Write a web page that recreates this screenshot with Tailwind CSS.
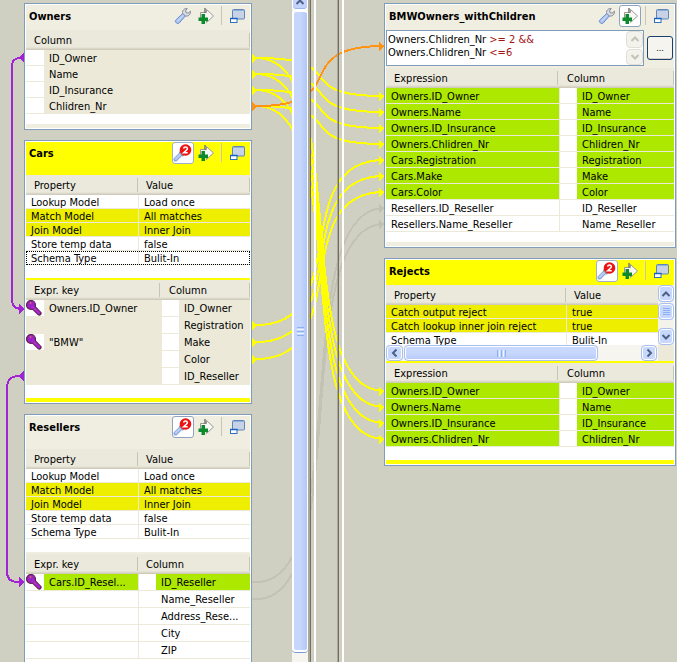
<!DOCTYPE html>
<html lang="en">
<head>
<meta charset="utf-8">
<title>Map editor</title>
<script src="https://cdn.jsdelivr.net/npm/@tailwindcss/browser@4"></script>
</head>
<body class="bg-[#d0d0c2] text-[11px] text-black font-['DejaVu_Sans_Condensed','DejaVu_Sans',sans-serif]">

<svg class="hidden" aria-hidden="true">
  <defs>
    <symbol id="i-wrench" viewBox="0 0 18 18">
      <path d="M1.600 13.200 9 6.200 11.600 8.800 5 16.200C3.600 17.600.4 15 1.600 13.200Z" fill="#a9c1f0" stroke="#6d8fd0" stroke-width="1"/>
      <path d="M3.400 14.200 9.600 8" stroke="#c6d7f9" stroke-width="1.400"/>
      <path d="M8.600 6.600C8 3.600 10.200 1.200 13.200 1.600L11.600 3.800 12.200 5.800 14.200 6 16.400 4.200C17 7 14.600 9.600 11.600 9Z" fill="#d9dce2" stroke="#808898" stroke-width="1"/>
    </symbol>
    <symbol id="i-add" viewBox="0 0 18 18">
      <path d="M3.500 5.500H9.500V2.500L16.500 9 9.500 15.500V12.500H3.500Z" fill="#f7f7f4" stroke="#9a9a94" stroke-width="1"/>
      <path d="M8 1v5" stroke="#77776f" stroke-width="1.500"/>
      <path d="M4.500 7H8v3.500h3V14H8v3H4.500v-3h-3v-3.500h3Z" fill="#0c8a2c"/>
    </symbol>
    <symbol id="i-window" viewBox="0 0 17 17">
      <rect x="3.500" y="1.500" width="12" height="9.500" rx="1" fill="#c8d2e6" stroke="#5f86bb"/>
      <path d="M4 2.500h11" stroke="#8fb0da"/>
      <rect x="1.500" y="10.500" width="6.500" height="4" fill="#fff" stroke="#2f6fc0"/>
      <path d="M1 10.500h7.500" stroke="#1b62c4" stroke-width="1.500"/>
    </symbol>
    <symbol id="i-alert" viewBox="0 0 20 20">
      <path d="M2.500 16.500 8.500 10.500" stroke="#86a4dc" stroke-width="4" stroke-linecap="round"/>
      <path d="M2.800 16 8 10.800" stroke="#b9cdf2" stroke-width="2.400" stroke-linecap="round"/>
      <path d="M6.500 8.500 10.500 13" stroke="#8a90a0" stroke-width="2"/>
      <circle cx="12.500" cy="7" r="5.800" fill="#ee1111"/>
      <path d="M10.600 5.600Q10.800 4 12.500 4T14.400 5.600Q14.400 6.800 10.600 9.800H14.700" fill="none" stroke="#fff" stroke-width="1.500"/>
    </symbol>
    <symbol id="i-key" viewBox="0 0 16 16">
      <path d="M7.500 7.500 13.300 13.300" stroke="#5e2448" stroke-width="4.600" stroke-linecap="round"/>
      <circle cx="5" cy="5" r="4.500" fill="#9b22c4" stroke="#5e2448" stroke-width="1.200"/>
      <path d="M7 7 13 13" stroke="#a526d2" stroke-width="2.800" stroke-linecap="round"/>
      <path d="M3.500 3h2M4.500 2v2M8.500 10l1-1" stroke="#cf6a72" stroke-width="1"/>
    </symbol>
    <symbol id="i-up" viewBox="0 0 10 10"><path d="M1.500 7 5 3.500 8.500 7" fill="none" stroke="currentColor" stroke-width="2"/></symbol>
    <symbol id="i-down" viewBox="0 0 10 10"><path d="M1.500 3 5 6.500 8.500 3" fill="none" stroke="currentColor" stroke-width="2"/></symbol>
    <symbol id="i-left" viewBox="0 0 10 10"><path d="M6.500 1.500 3 5 6.500 8.500" fill="none" stroke="currentColor" stroke-width="2"/></symbol>
    <symbol id="i-right" viewBox="0 0 10 10"><path d="M3.500 1.500 7 5 3.500 8.500" fill="none" stroke="currentColor" stroke-width="2"/></symbol>
  </defs>
</svg>

<div class="relative flex h-screen overflow-hidden">

  <!-- Connections between the tables -->
  <svg class="absolute left-0 top-0" width="677" height="662" fill="none" stroke-width="2" shape-rendering="crispEdges" aria-hidden="true">
    <g stroke="#c3c3b5">
      <path d="M252 582h5C355 582 286 208 384 208"/>
      <path d="M252 599h5C355 599 286 224 384 224"/>
    </g>
    <g stroke="#ffff00">
      <path d="M252 58h5C355 58 286 96 384 96"/>
      <path d="M252 74h5C355 74 286 112 384 112"/>
      <path d="M252 90h5C355 90 286 128 384 128"/>
      <path d="M252 106h5C355 106 286 144 384 144"/>
      <path d="M252 58h5C355 58 286 391 384 391"/>
      <path d="M252 74h5C355 74 286 407 384 407"/>
      <path d="M252 90h5C355 90 286 423 384 423"/>
      <path d="M252 106h5C355 106 286 439 384 439"/>
      <path d="M252 325h5C355 325 286 160 384 160"/>
      <path d="M252 342h5C355 342 286 176 384 176"/>
      <path d="M252 359h5C355 359 286 192 384 192"/>
    </g>
    <path stroke="#ff9414" d="M252 106h5C355 106 286 46 384 46"/>
    <g fill="#ffff00">
      <path d="M252 53v11l5-5.500zM252 69v11l5-5.500zM252 85v11l5-5.500zM252 320v11l5-5.500zM252 337v11l5-5.500zM252 354v11l5-5.500z"/>
      <path d="M379 91v11l5-5.500zM379 107v11l5-5.500zM379 123v11l5-5.500zM379 139v11l5-5.500zM379 155v11l5-5.500zM379 171v11l5-5.500zM379 187v11l5-5.500z"/>
      <path d="M379 386v11l5-5.500zM379 402v11l5-5.500zM379 418v11l5-5.500zM379 434v11l5-5.500z"/>
    </g>
    <path fill="#c1c1b2" d="M379 203v11l5-5.500zM379 219v11l5-5.500z"/>
    <path fill="#ff9414" d="M252 101v11l5-5.500zM379 41v11l5-5.500z"/>
    <g stroke="#a024d4">
      <path d="M24 58h-4Q12 58 12 66V299Q12 309 22 309"/>
      <path d="M24 376h-5Q7 376 7 388V572Q7 582 18 582H22"/>
    </g>
    <path fill="#a024d4" d="M24 52v11l-5-5.500zM24 370v12l-5-6zM19 303v12l5-6zM19 576v12l5-6z"/>
  </svg>

  <!-- Input tables -->
  <main class="relative flex min-w-0 flex-[311_1_0px]">
    <div class="flex min-w-0 flex-1 flex-col gap-[10px] pl-6 pr-10 pt-[3px]">

      <section class="shrink-0 border border-[#7f9db9] bg-white p-px" aria-label="Owners">
        <header class="flex h-[25px] items-start bg-[#f0eee1] pl-[3px] pr-1">
          <h2 class="flex-1 font-bold leading-[24px]">Owners</h2>
          <button class="flex size-[22px] items-center justify-center" aria-label="Settings"><svg class="size-[18px]"><use href="#i-wrench"/></svg></button>
          <button class="ml-px flex size-[22px] items-center justify-center" aria-label="Add"><svg class="size-[18px]"><use href="#i-add"/></svg></button>
          <span class="mx-1 mt-px h-[19px] w-px bg-[#c9c6b3]"></span>
          <button class="flex h-[22px] w-[20px] items-center justify-end" aria-label="Minimize"><svg class="size-[17px]"><use href="#i-window"/></svg></button>
        </header>
        <table class="w-full table-fixed border-separate border-spacing-0 [&_td]:h-4 [&_td]:border-b [&_td]:border-[#ece9d8] [&_td]:pt-[2px] [&_td]:leading-[13px] [&_th]:h-5 [&_th]:bg-linear-to-b [&_th]:from-[#ebe9dc] [&_th]:from-85% [&_th]:to-[#cbc6b5] [&_th]:text-left [&_th]:font-normal">
          <colgroup><col class="w-[18px]"><col></colgroup>
          <thead><tr><th colspan="2"><span class="flex h-[14px] items-center border-r border-[#c7c5b2] pl-2 pt-[2px]">Column</span></th></tr></thead>
          <tbody>
            <tr><td></td><td class="bg-[#ece9d8] pl-[5px]">ID_Owner</td></tr>
            <tr><td></td><td class="bg-[#ece9d8] pl-[5px]">Name</td></tr>
            <tr><td></td><td class="bg-[#ece9d8] pl-[5px]">ID_Insurance</td></tr>
            <tr><td></td><td class="bg-[#ece9d8] pl-[5px]">Chlidren_Nr</td></tr>
          </tbody>
        </table>
        <div class="mt-[10px] h-1 bg-[#f0eee1]"></div>
      </section>

      <section class="shrink-0 border border-[#7f9db9] bg-white p-px" aria-label="Cars">
        <header class="flex h-[33px] items-start bg-[#ffff00] pl-[3px] pr-1">
          <h2 class="flex-1 font-bold leading-[24px]">Cars</h2>
          <button class="flex size-[22px] items-center justify-center rounded-[3px] border border-[#a0b0cc] bg-white" aria-label="Settings, 2 changed"><svg class="size-5"><use href="#i-alert"/></svg></button>
          <button class="ml-px flex size-[22px] items-center justify-center" aria-label="Add"><svg class="size-[18px]"><use href="#i-add"/></svg></button>
          <span class="mx-1 mt-px h-[19px] w-px bg-[#c9c6b3]"></span>
          <button class="flex h-[22px] w-[20px] items-center justify-end" aria-label="Minimize"><svg class="size-[17px]"><use href="#i-window"/></svg></button>
        </header>
        <table class="w-full table-fixed border-separate border-spacing-0 [&_td]:h-[14px] [&_td]:border-b [&_td]:border-[#ece9d8] [&_td]:pl-[5px] [&_td]:pt-[2px] [&_td]:leading-[11px] [&_td:first-child]:border-r [&_th]:h-5 [&_th]:bg-linear-to-b [&_th]:from-[#ebe9dc] [&_th]:from-85% [&_th]:to-[#cbc6b5] [&_th]:text-left [&_th]:font-normal">
          <colgroup><col class="w-[113px]"><col></colgroup>
          <thead><tr>
            <th><span class="mr-px flex h-[14px] items-center border-r border-[#c7c5b2] pl-2 pt-[2px]">Property</span></th>
            <th><span class="flex h-[14px] items-center border-r border-[#c7c5b2] pl-[7px] pt-[2px]">Value</span></th>
          </tr></thead>
          <tbody>
            <tr><td>Lookup Model</td><td>Load once</td></tr>
            <tr class="bg-[#eeee00]"><td>Match Model</td><td>All matches</td></tr>
            <tr class="bg-[#eeee00]"><td>Join Model</td><td>Inner Join</td></tr>
            <tr><td>Store temp data</td><td>false</td></tr>
            <tr class="outline-1 -outline-offset-1 outline-dotted outline-black"><td>Schema Type</td><td>Bulit-In</td></tr>
          </tbody>
        </table>
        <div class="mt-[13px] h-[2px] bg-[#ffff00]"></div>
        <table class="w-full table-fixed border-separate border-spacing-0 bg-[#ece9d8] [&_td]:h-[17px] [&_td]:border-b [&_td]:border-[#ece9d8] [&_td]:pt-[2px] [&_td]:leading-[14px] [&_th]:h-5 [&_th]:bg-linear-to-b [&_th]:from-[#ebe9dc] [&_th]:from-85% [&_th]:to-[#cbc6b5] [&_th]:text-left [&_th]:font-normal">
          <colgroup><col class="w-[18px]"><col class="w-[118px]"><col class="w-[17px]"><col></colgroup>
          <thead><tr>
            <th colspan="2"><span class="mr-[2px] flex h-[14px] items-center border-r border-[#c7c5b2] pl-2 pt-[2px]">Expr. key</span></th>
            <th colspan="2"><span class="flex h-[14px] items-center border-r border-[#c7c5b2] pl-[7px] pt-[2px]">Column</span></th>
          </tr></thead>
          <tbody>
            <tr><td class="bg-white pt-0!"><svg class="size-4"><use href="#i-key"/></svg></td><td class="pl-[5px]">Owners.ID_Owner</td><td class="bg-white"></td><td class="pl-[5px]">ID_Owner</td></tr>
            <tr><td></td><td></td><td class="bg-white"></td><td class="pl-[5px]">Registration</td></tr>
            <tr><td class="bg-white pt-0!"><svg class="size-4"><use href="#i-key"/></svg></td><td class="pl-[5px]">"BMW"</td><td class="bg-white"></td><td class="pl-[5px]">Make</td></tr>
            <tr><td></td><td></td><td class="bg-white"></td><td class="pl-[5px]">Color</td></tr>
            <tr><td></td><td></td><td class="bg-white"></td><td class="pl-[5px]">ID_Reseller</td></tr>
          </tbody>
        </table>
        <div class="mt-[13px] h-1 bg-[#ffff00]"></div>
      </section>

      <section class="shrink-0 border border-[#7f9db9] bg-white p-px" aria-label="Resellers">
        <header class="flex h-[33px] items-start bg-[#f0eee1] pl-[3px] pr-1">
          <h2 class="flex-1 font-bold leading-[24px]">Resellers</h2>
          <button class="flex size-[22px] items-center justify-center rounded-[3px] border border-[#8fa3c0] bg-white" aria-label="Settings, 2 changed"><svg class="size-5"><use href="#i-alert"/></svg></button>
          <button class="ml-px flex size-[22px] items-center justify-center" aria-label="Add"><svg class="size-[18px]"><use href="#i-add"/></svg></button>
          <span class="mx-1 mt-px h-[19px] w-px bg-[#c9c6b3]"></span>
          <button class="flex h-[22px] w-[20px] items-center justify-end" aria-label="Minimize"><svg class="size-[17px]"><use href="#i-window"/></svg></button>
        </header>
        <table class="w-full table-fixed border-separate border-spacing-0 [&_td]:h-[14px] [&_td]:border-b [&_td]:border-[#ece9d8] [&_td]:pl-[5px] [&_td]:pt-[2px] [&_td]:leading-[11px] [&_td:first-child]:border-r [&_th]:h-5 [&_th]:bg-linear-to-b [&_th]:from-[#ebe9dc] [&_th]:from-85% [&_th]:to-[#cbc6b5] [&_th]:text-left [&_th]:font-normal">
          <colgroup><col class="w-[113px]"><col></colgroup>
          <thead><tr>
            <th><span class="mr-px flex h-[14px] items-center border-r border-[#c7c5b2] pl-2 pt-[2px]">Property</span></th>
            <th><span class="flex h-[14px] items-center border-r border-[#c7c5b2] pl-[7px] pt-[2px]">Value</span></th>
          </tr></thead>
          <tbody>
            <tr><td>Lookup Model</td><td>Load once</td></tr>
            <tr class="bg-[#eeee00]"><td>Match Model</td><td>All matches</td></tr>
            <tr class="bg-[#eeee00]"><td>Join Model</td><td>Inner Join</td></tr>
            <tr><td>Store temp data</td><td>false</td></tr>
            <tr><td>Schema Type</td><td>Bulit-In</td></tr>
          </tbody>
        </table>
        <div class="mt-[13px] h-[2px] bg-[#f0eee1]"></div>
        <table class="w-full table-fixed border-separate border-spacing-0 [&_td]:h-[17px] [&_td]:border-b [&_td]:border-[#ece9d8] [&_td]:pt-[2px] [&_td]:leading-[14px] [&_th]:h-5 [&_th]:bg-linear-to-b [&_th]:from-[#ebe9dc] [&_th]:from-85% [&_th]:to-[#cbc6b5] [&_th]:text-left [&_th]:font-normal">
          <colgroup><col class="w-[18px]"><col class="w-[95px]"><col class="w-[17px]"><col></colgroup>
          <thead><tr>
            <th colspan="2"><span class="mr-px flex h-[14px] items-center border-r border-[#c7c5b2] pl-2 pt-[2px]">Expr. key</span></th>
            <th colspan="2"><span class="flex h-[14px] items-center border-r border-[#c7c5b2] pl-[7px] pt-[2px]">Column</span></th>
          </tr></thead>
          <tbody>
            <tr><td class="pt-0!"><svg class="size-4"><use href="#i-key"/></svg></td><td class="border-r bg-[#ade800] pl-[5px]">Cars.ID_Resel...</td><td></td><td class="bg-[#ade800] pl-[5px]">ID_Reseller</td></tr>
            <tr><td></td><td class="border-r"></td><td></td><td class="pl-[5px]">Name_Reseller</td></tr>
            <tr><td></td><td class="border-r"></td><td></td><td class="pl-[5px]">Address_Rese...</td></tr>
            <tr><td></td><td class="border-r"></td><td></td><td class="pl-[5px]">City</td></tr>
            <tr><td></td><td class="border-r"></td><td></td><td class="pl-[5px]">ZIP</td></tr>
          </tbody>
        </table>
        <div class="mt-[13px] h-1 bg-[#f0eee1]"></div>
      </section>
    </div>

    <!-- Vertical scrollbar and pane edge -->
    <div class="flex w-4 flex-col bg-[#f6f5f0]">
      <button class="flex h-[10px] items-end justify-center overflow-hidden rounded-b-sm border border-t-0 border-white bg-[#c3d3fd] text-[#4d6185] shadow-[inset_0_-1px_0_#9db4e8]" aria-label="Scroll up"><svg class="mb-[2px] size-[10px] shrink-0"><use href="#i-up"/></svg></button>
      <div class="mb-[10px] flex flex-1 flex-col items-center justify-center gap-px rounded-sm border-2 border-r border-white bg-linear-to-r from-[#c6d6fc] from-50% to-[#b0c8f8] shadow-[0_1px_0_#7a9bd0]">
        <span class="h-px w-[7px] bg-[#8cb0f8]"></span><span class="h-px w-[7px] bg-[#eef4fe]"></span><span class="h-px w-[7px] bg-[#8cb0f8]"></span><span class="h-px w-[7px] bg-[#eef4fe]"></span><span class="h-px w-[7px] bg-[#8cb0f8]"></span>
      </div>
    </div>
    <div class="w-[3px] border-l-2 border-r border-l-[#aca899] border-r-[#716f64]"></div>
  </main>

  <div class="relative w-7 border-r border-[#716f64]">
    <div class="ml-[3px] h-full border-l-2 border-r border-l-white border-r-[#aca899]"></div>
  </div>

  <!-- Output tables -->
  <aside class="relative min-w-0 flex-[338_1_0px]">
    <div class="ml-[3px] flex h-full flex-col gap-[10px] border-l-2 border-white pl-10 pr-px pt-[3px]">

      <section class="shrink-0 border border-[#7f9db9] bg-white p-px" aria-label="BMWOwners_withChildren">
        <header class="flex h-[25px] items-start bg-[#f0eee1] pl-[3px] pr-1">
          <h2 class="flex-1 font-bold leading-[24px]">BMWOwners_withChildren</h2>
          <button class="flex size-[22px] items-center justify-center" aria-label="Settings"><svg class="size-[18px]"><use href="#i-wrench"/></svg></button>
          <button class="ml-px flex size-[22px] items-center justify-center rounded-[3px] border border-[#8fa3c0] bg-white" aria-label="Add"><svg class="size-[18px]"><use href="#i-add"/></svg></button>
          <span class="mx-1 mt-px h-[19px] w-px bg-[#c9c6b3]"></span>
          <button class="flex h-[22px] w-[20px] items-center justify-end" aria-label="Minimize"><svg class="size-[17px]"><use href="#i-window"/></svg></button>
        </header>
        <div class="flex items-center gap-[3px] bg-[#f0eee1] pb-[2px] pr-px">
          <div class="flex h-9 min-w-0 flex-1 border border-[#7f9db9] bg-white">
            <div class="relative flex-1 leading-[13px]">
              <pre class="pt-[2px] pl-px font-['DejaVu_Sans_Condensed','DejaVu_Sans',sans-serif]" aria-hidden="true">Owners.Chlidren_Nr <span class="text-[#a31515]">&gt;= 2 &amp;&amp;</span>
Owners.Chlidren_Nr <span class="text-[#a31515]">&lt;=6</span></pre>
              <textarea class="absolute inset-0 resize-none overflow-hidden pt-[2px] pl-px text-transparent caret-black" aria-label="Filter expression" spellcheck="false">Owners.Chlidren_Nr &gt;= 2 &amp;&amp;
Owners.Chlidren_Nr &lt;=6</textarea>
            </div>
            <div class="flex w-[17px] flex-col gap-px text-[#c5c3b8]">
              <button class="flex flex-1 items-center justify-center rounded-sm border border-[#e2e0d6] bg-[#f3f2ec]" aria-label="Scroll up"><svg class="size-[10px]"><use href="#i-up"/></svg></button>
              <button class="flex flex-1 items-center justify-center rounded-sm border border-[#e2e0d6] bg-[#f3f2ec]" aria-label="Scroll down"><svg class="size-[10px]"><use href="#i-down"/></svg></button>
            </div>
          </div>
          <button class="h-6 w-[26px] rounded-[3px] border border-[#1c3f70] bg-[#f5f4ef] text-[9px] leading-[16px] shadow-[inset_0_-1px_0_#d6d0c5]" aria-label="Edit expression">...</button>
        </div>
        <table class="w-full table-fixed border-separate border-spacing-0 [&_td]:h-4 [&_td]:border-b [&_td]:border-[#ece9d8] [&_td]:pl-[5px] [&_td]:pt-[2px] [&_td]:leading-[13px] [&_td:first-child]:border-r [&_th]:h-5 [&_th]:bg-linear-to-b [&_th]:from-[#ebe9dc] [&_th]:from-85% [&_th]:to-[#cbc6b5] [&_th]:text-left [&_th]:font-normal">
          <colgroup><col class="w-[174px]"><col class="w-[17px]"><col></colgroup>
          <thead><tr>
            <th><span class="mr-[2px] flex h-[14px] items-center border-r border-[#c7c5b2] pl-2 pt-[2px]">Expression</span></th>
            <th colspan="2"><span class="flex h-[14px] items-center border-r border-[#c7c5b2] pl-[7px] pt-[2px]">Column</span></th>
          </tr></thead>
          <tbody>
            <tr><td class="bg-[#ade800]">Owners.ID_Owner</td><td></td><td class="bg-[#ade800]">ID_Owner</td></tr>
            <tr><td class="bg-[#ade800]">Owners.Name</td><td></td><td class="bg-[#ade800]">Name</td></tr>
            <tr><td class="bg-[#ade800]">Owners.ID_Insurance</td><td></td><td class="bg-[#ade800]">ID_Insurance</td></tr>
            <tr><td class="bg-[#ade800]">Owners.Chlidren_Nr</td><td></td><td class="bg-[#ade800]">Chlidren_Nr</td></tr>
            <tr><td class="bg-[#ade800]">Cars.Registration</td><td></td><td class="bg-[#ade800]">Registration</td></tr>
            <tr><td class="bg-[#ade800]">Cars.Make</td><td></td><td class="bg-[#ade800]">Make</td></tr>
            <tr><td class="bg-[#ade800]">Cars.Color</td><td></td><td class="bg-[#ade800]">Color</td></tr>
            <tr><td>Resellers.ID_Reseller</td><td></td><td>ID_Reseller</td></tr>
            <tr><td>Resellers.Name_Reseller</td><td></td><td>Name_Reseller</td></tr>
          </tbody>
        </table>
        <div class="mt-[10px] h-1 bg-[#f0eee1]"></div>
      </section>

      <section class="shrink-0 border border-[#7f9db9] bg-white p-px" aria-label="Rejects">
        <header class="flex h-[25px] items-start bg-[#ffff00] pl-[3px] pr-1">
          <h2 class="flex-1 font-bold leading-[24px]">Rejects</h2>
          <button class="flex size-[22px] items-center justify-center rounded-[3px] border border-[#a0b0cc] bg-white" aria-label="Settings, 2 changed"><svg class="size-5"><use href="#i-alert"/></svg></button>
          <button class="ml-px flex size-[22px] items-center justify-center" aria-label="Add"><svg class="size-[18px]"><use href="#i-add"/></svg></button>
          <span class="mx-1 mt-px h-[19px] w-px bg-[#c9c6b3]"></span>
          <button class="flex h-[22px] w-[20px] items-center justify-end" aria-label="Minimize"><svg class="size-[17px]"><use href="#i-window"/></svg></button>
        </header>
        <div class="flex h-[60px]">
          <div class="min-w-0 flex-1 overflow-hidden">
            <table class="w-full table-fixed border-separate border-spacing-0 [&_td]:h-[14px] [&_td]:border-b [&_td]:border-[#ece9d8] [&_td]:pl-[5px] [&_td]:pt-[2px] [&_td]:leading-[11px] [&_td:first-child]:border-r [&_th]:h-5 [&_th]:bg-linear-to-b [&_th]:from-[#ebe9dc] [&_th]:from-85% [&_th]:to-[#cbc6b5] [&_th]:text-left [&_th]:font-normal">
              <colgroup><col class="w-[181px]"><col></colgroup>
              <thead><tr>
                <th><span class="mr-px flex h-[14px] items-center border-r border-[#c7c5b2] pl-2 pt-[2px]">Property</span></th>
                <th><span class="flex h-[14px] items-center pl-[7px] pt-[2px]">Value</span></th>
              </tr></thead>
              <tbody>
                <tr class="bg-[#eeee00]"><td>Catch output reject</td><td>true</td></tr>
                <tr class="bg-[#eeee00]"><td>Catch lookup inner join reject</td><td>true</td></tr>
                <tr><td>Schema Type</td><td>Bulit-In</td></tr>
              </tbody>
            </table>
          </div>
          <div class="flex w-4 flex-col bg-[#f3f3ec] text-[#4d6185]">
            <button class="flex h-[17px] items-center justify-center rounded-sm border border-[#a9bff0] bg-[#c8d8fc] shadow-[inset_0_0_0_1px_#fff]" aria-label="Scroll up"><svg class="size-[10px]"><use href="#i-up"/></svg></button>
            <div class="mt-px flex h-[17px] flex-col items-center justify-center gap-px rounded-sm border border-[#a9bff0] bg-[#c8d8fc] shadow-[inset_0_0_0_1px_#fff]">
              <span class="h-px w-[7px] bg-[#8cb0f8]"></span><span class="h-px w-[7px] bg-[#8cb0f8]"></span><span class="h-px w-[7px] bg-[#8cb0f8]"></span><span class="h-px w-[7px] bg-[#8cb0f8]"></span>
            </div>
            <button class="mt-auto flex h-[17px] items-center justify-center rounded-sm border border-[#a9bff0] bg-[#c8d8fc] shadow-[inset_0_0_0_1px_#fff]" aria-label="Scroll down"><svg class="size-[10px]"><use href="#i-down"/></svg></button>
          </div>
        </div>
        <div class="flex h-4 bg-[#ece9d8]">
          <div class="flex min-w-0 flex-1 bg-[#f6f5f0] text-[#4d6185]">
            <button class="flex w-[17px] items-center justify-center rounded-sm border border-[#a9bff0] bg-[#c8d8fc] shadow-[inset_0_0_0_1px_#fff]" aria-label="Scroll left"><svg class="size-[10px]"><use href="#i-left"/></svg></button>
            <div class="ml-px flex w-[194px] items-center justify-center gap-px rounded-sm border border-[#a9bff0] bg-linear-to-b from-[#c8d8fc] from-50% to-[#b4caf8] shadow-[inset_0_0_0_1px_#fff]">
              <span class="h-[7px] w-px bg-[#8cb0f8]"></span><span class="h-[7px] w-px bg-[#eef4fe]"></span><span class="h-[7px] w-px bg-[#8cb0f8]"></span><span class="h-[7px] w-px bg-[#eef4fe]"></span><span class="h-[7px] w-px bg-[#8cb0f8]"></span>
            </div>
            <button class="ml-auto mr-px flex w-4 items-center justify-center rounded-sm border border-[#a9bff0] bg-[#c8d8fc] shadow-[inset_0_0_0_1px_#fff]" aria-label="Scroll right"><svg class="size-[10px]"><use href="#i-right"/></svg></button>
          </div>
          <div class="w-4"></div>
        </div>
        <div class="h-[2px] bg-[#ffff00]"></div>
        <table class="w-full table-fixed border-separate border-spacing-0 [&_td]:h-4 [&_td]:border-b [&_td]:border-[#ece9d8] [&_td]:pl-[5px] [&_td]:pt-[2px] [&_td]:leading-[13px] [&_td:first-child]:border-r [&_th]:h-5 [&_th]:bg-linear-to-b [&_th]:from-[#ebe9dc] [&_th]:from-85% [&_th]:to-[#cbc6b5] [&_th]:text-left [&_th]:font-normal">
          <colgroup><col class="w-[174px]"><col class="w-[17px]"><col></colgroup>
          <thead><tr>
            <th><span class="mr-[2px] flex h-[14px] items-center border-r border-[#c7c5b2] pl-2 pt-[2px]">Expression</span></th>
            <th colspan="2"><span class="flex h-[14px] items-center border-r border-[#c7c5b2] pl-[7px] pt-[2px]">Column</span></th>
          </tr></thead>
          <tbody>
            <tr><td class="bg-[#ade800]">Owners.ID_Owner</td><td></td><td class="bg-[#ade800]">ID_Owner</td></tr>
            <tr><td class="bg-[#ade800]">Owners.Name</td><td></td><td class="bg-[#ade800]">Name</td></tr>
            <tr><td class="bg-[#ade800]">Owners.ID_Insurance</td><td></td><td class="bg-[#ade800]">ID_Insurance</td></tr>
            <tr><td class="bg-[#ade800]">Owners.Chlidren_Nr</td><td></td><td class="bg-[#ade800]">Chlidren_Nr</td></tr>
          </tbody>
        </table>
        <div class="mt-[13px] h-1 bg-[#ffff00]"></div>
      </section>
    </div>
  </aside>
</div>
</body>
</html>
